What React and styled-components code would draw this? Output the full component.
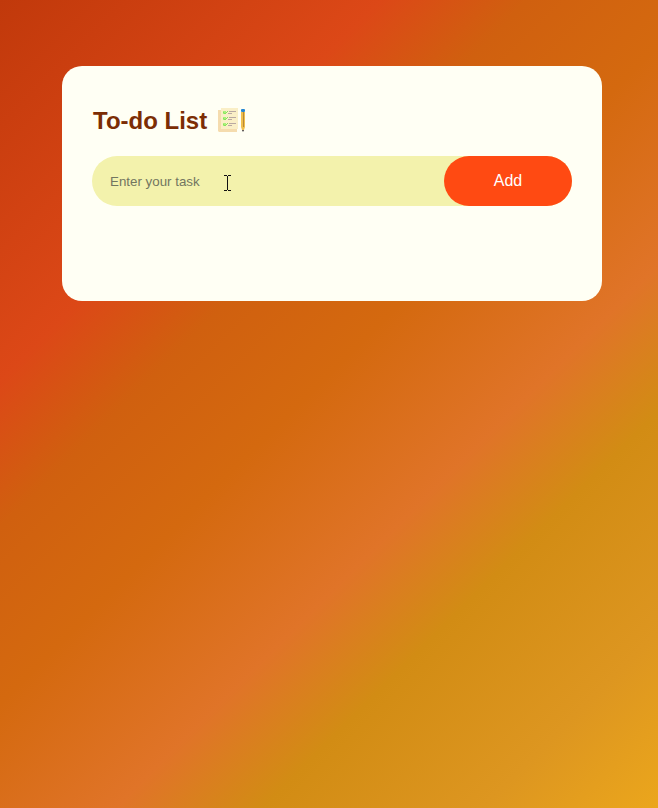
import React, { useState } from "react";
import styled, { createGlobalStyle } from "styled-components";

const GlobalStyle = createGlobalStyle`
  * {
    box-sizing: border-box;
    margin: 0;
    padding: 0;
    font-family: "Liberation Sans", Arial, sans-serif;
  }
`;

const Page = styled.main`
  min-height: 100vh;
  padding: 66px 56px 10px 62px;
  background: linear-gradient(
    135deg,
    #c1390b,
    #dc4817 26%,
    #d0600f 36%,
    #d4690f 48%,
    #e07428 63%,
    #d28c14 73%,
    #dd9620 88%,
    #eba61c
  );
`;

const Card = styled.section`
  width: 100%;
  max-width: 540px;
  margin: 0 auto;
  padding: 40px 30px 70px;
  border-radius: 20px;
  background: #fffff4;
`;

const Title = styled.h2`
  display: flex;
  align-items: center;
  gap: 10px;
  height: 30px;
  margin-bottom: 20px;
  padding-left: 1px;
  font-size: 24px;
  line-height: 30px;
  color: #7c2d04;
`;

const TitleIcon = styled.svg`
  width: 30px;
  height: 30px;
`;

const TaskForm = styled.form`
  position: relative;
  display: flex;
  height: 50px;
  margin-bottom: 25px;
  border-radius: 25px;
  background: #f3f2ac;
`;

const TaskInput = styled.input`
  flex: 1;
  min-width: 0;
  padding: 0 18px;
  border: none;
  outline: none;
  background: transparent;
  color: #444;

  &::placeholder {
    color: #727660;
    opacity: 1;
  }
`;

const AddButton = styled.button`
  width: 128px;
  border: none;
  border-radius: 25px;
  background: #ff4a12;
  color: #fff;
  font-size: 16px;
  cursor: pointer;
`;

const TextCursor = styled.svg`
  position: absolute;
  left: 132px;
  top: 19px;
  width: 7px;
  height: 16px;
  pointer-events: none;
`;

const TaskList = styled.ul`
  list-style: none;
`;

const TaskItem = styled.li`
  padding: 12px 18px;
  font-size: 16px;
  color: #555;
`;

function ChecklistIcon() {
  return (
    <TitleIcon viewBox="0 0 30 30" aria-hidden="true">
      <path d="M4 2h17v21H4z" fill="#faefc6" />
      <path d="M1 4h3v19h16v3H2l-1-1z" fill="#f5dcae" />
      <path d="M6 5h3v3H6zM6 11h3v3H6zM6 17h3v3H6z" fill="#a8f078" />
      <path
        d="M6 6l2 2 3-3M6 12l2 2 3-3M6 18l2 2 3-3"
        fill="none"
        stroke="#86e35e"
      />
      <path
        d="M12 5.5h7M11 7.5h4M12 11.5h7M11 13.5h4M12 17.5h7M11 19.5h4"
        fill="none"
        stroke="#b9a9a2"
      />
      <path d="M24 6h4v15l-1 3h-2l-1-3z" fill="#f0c04e" />
      <path d="M26 6h1v15h-1z" fill="#b88838" />
      <rect x="24" y="3" width="4" height="3" rx="1" fill="#2587d2" />
      <path d="M25 24h2l-1 2z" fill="#332a2a" />
    </TitleIcon>
  );
}

export default function App() {
  const [task, setTask] = useState("");
  const [tasks, setTasks] = useState([]);

  const addTask = (event) => {
    event.preventDefault();
    const text = task.trim();
    if (!text) return;
    setTasks([...tasks, text]);
    setTask("");
  };

  return (
    <>
      <GlobalStyle />
      <Page>
        <Card>
          <Title>
            To-do List
            <ChecklistIcon />
          </Title>
          <TaskForm onSubmit={addTask}>
            <TaskInput
              type="text"
              aria-label="Enter your task"
              placeholder="Enter your task"
              value={task}
              onChange={(event) => setTask(event.target.value)}
            />
            <AddButton type="submit">Add</AddButton>
            <TextCursor viewBox="0 0 7 16" aria-hidden="true">
              <path
                d="M0 .5h3M4 .5h3M3.5 1v14M0 15.5h3M4 15.5h3"
                fill="none"
                stroke="#111"
              />
            </TextCursor>
          </TaskForm>
          <TaskList>
            {tasks.map((text, index) => (
              <TaskItem key={index}>{text}</TaskItem>
            ))}
          </TaskList>
        </Card>
      </Page>
    </>
  );
}
